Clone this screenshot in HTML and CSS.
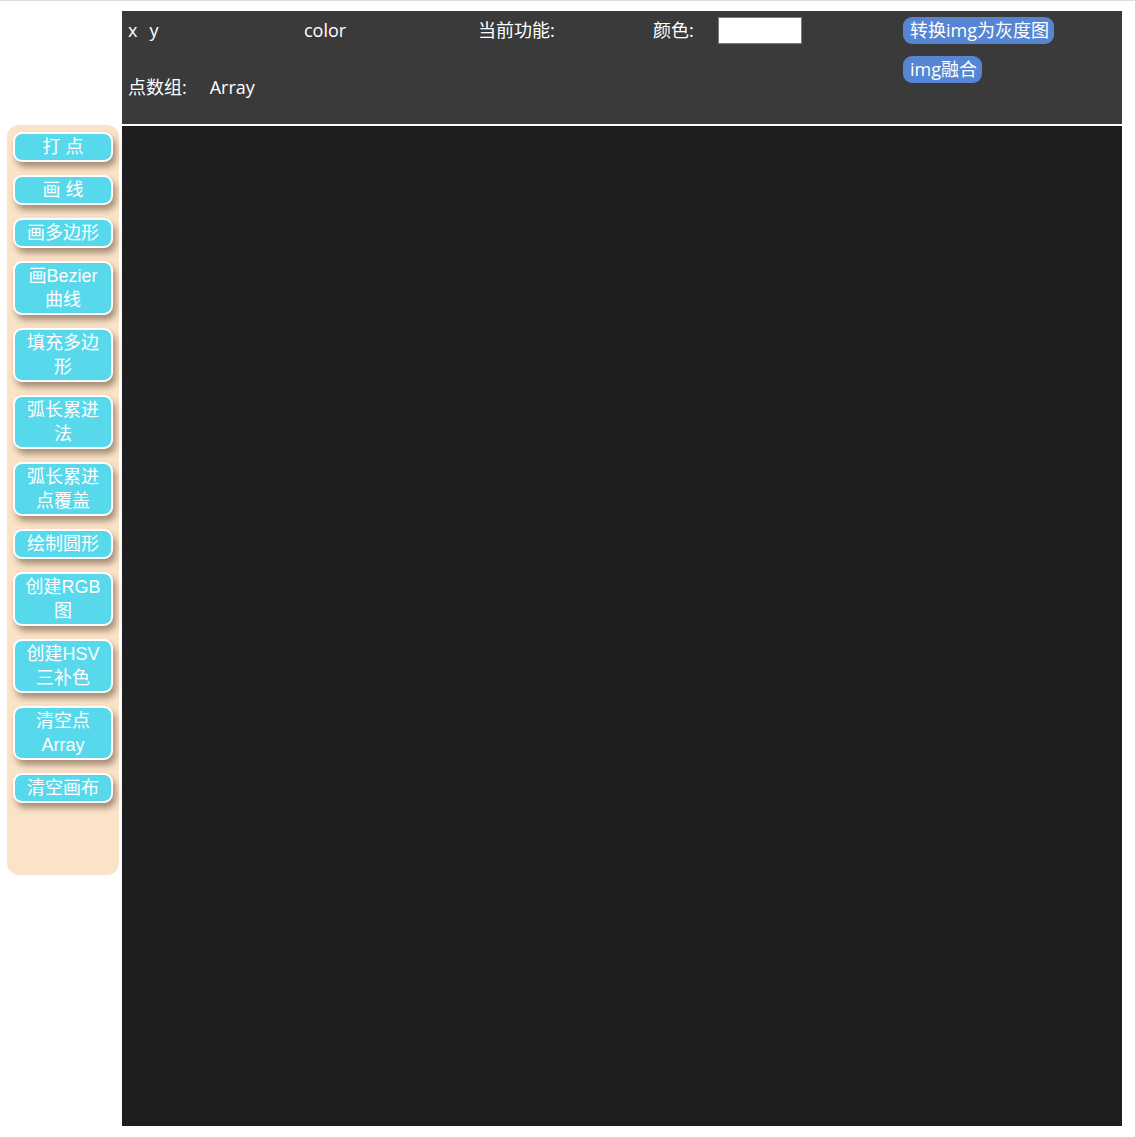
FILE: index.html
```html
<!DOCTYPE html>
<html lang="zh">
<head>
<meta charset="utf-8">
<title>画板</title>
<link rel="stylesheet" href="styles.css">
</head>
<body>
<div class="topline"></div>
<div class="page">
  <div class="spacer"></div>
  <div class="header">
    <div class="cell"><span class="xlabel">x</span><span>y</span></div>
    <div class="cell">color</div>
    <div class="cell">当前功能:</div>
    <div class="cell">颜色:<span class="colorbox"></span></div>
    <div class="actions">
      <button class="pill">转换img为灰度图</button>
      <button class="pill">img融合</button>
    </div>
    <div class="cell points"><span class="plabel">点数组:</span><span>Array</span></div>
  </div>
  <div class="sidebar">
    <button class="tool">打 点</button>
    <button class="tool">画 线</button>
    <button class="tool">画多边形</button>
    <button class="tool">画Bezier曲线</button>
    <button class="tool">填充多边形</button>
    <button class="tool">弧长累进法</button>
    <button class="tool">弧长累进点覆盖</button>
    <button class="tool">绘制圆形</button>
    <button class="tool">创建RGB图</button>
    <button class="tool">创建HSV三补色</button>
    <button class="tool">清空点Array</button>
    <button class="tool">清空画布</button>
  </div>
  <div class="canvas"></div>
</div>
</body>
</html>
```

FILE: styles.css
```css
html, body {
  margin: 0;
  padding: 0;
  background: #ffffff;
}
body {
  font-family: "Open Sans", "Noto Sans CJK SC", sans-serif;
  font-size: 18px;
  color: #ffffff;
}
.topline {
  height: 1px;
  background: #dedede;
}
.page {
  display: grid;
  grid-template-columns: 7px 112px 3px 1000px;
  grid-template-rows: 113px 1000px;
  row-gap: 2px;
  padding-top: 10px;
}
.spacer {
  grid-column: 1 / 4;
}
.header {
  grid-column: 4;
  grid-row: 1;
  background: #3a3a3a;
  box-sizing: border-box;
  padding: 6px 0 0 6px;
  display: grid;
  grid-template-columns: 176px 174px 175px 250px 1fr;
  grid-template-rows: 27px 27px;
  row-gap: 30px;
  align-items: center;
}
.cell {
  display: flex;
  align-items: center;
  line-height: 27px;
  white-space: nowrap;
}
.xlabel {
  margin-right: 12px;
}
.colorbox {
  display: inline-block;
  width: 84px;
  height: 27px;
  box-sizing: border-box;
  margin-left: 24px;
  background: #ffffff;
  border: 1px solid #7a7a7a;
}
.actions {
  grid-column: 5;
  grid-row: 1 / 3;
  align-self: start;
  display: flex;
  flex-direction: column;
  align-items: flex-start;
  gap: 12px;
}
.pill {
  font-family: inherit;
  font-size: 18px;
  color: #ffffff;
  background: #5585d3;
  border: none;
  border-radius: 9px;
  height: 27px;
  line-height: 27px;
  padding: 0 5px 0 7px;
  margin: 0;
}
.points {
  grid-column: 1 / 3;
  grid-row: 2;
}
.plabel {
  margin-right: 23px;
}
.sidebar {
  grid-column: 2;
  grid-row: 2;
  margin-top: -1px;
  height: 750px;
  background: #fbe3c8;
  border-radius: 12px;
  box-sizing: border-box;
  padding: 7px 0 0 6px;
  display: flex;
  flex-direction: column;
  align-items: flex-start;
  gap: 13px;
}
.tool {
  width: 100px;
  box-sizing: border-box;
  font-family: "Liberation Sans", "Noto Sans CJK SC", sans-serif;
  font-size: 18px;
  line-height: 24px;
  color: #ffffff;
  background: #58d8eb;
  border: 2px solid #ffffff;
  border-radius: 9px;
  padding: 1px 6px;
  margin: 0;
  box-shadow: 3px 5px 6px rgba(60, 40, 20, 0.45);
  text-align: center;
}
.canvas {
  grid-column: 4;
  grid-row: 2;
  background: #1e1e1e;
}
```
